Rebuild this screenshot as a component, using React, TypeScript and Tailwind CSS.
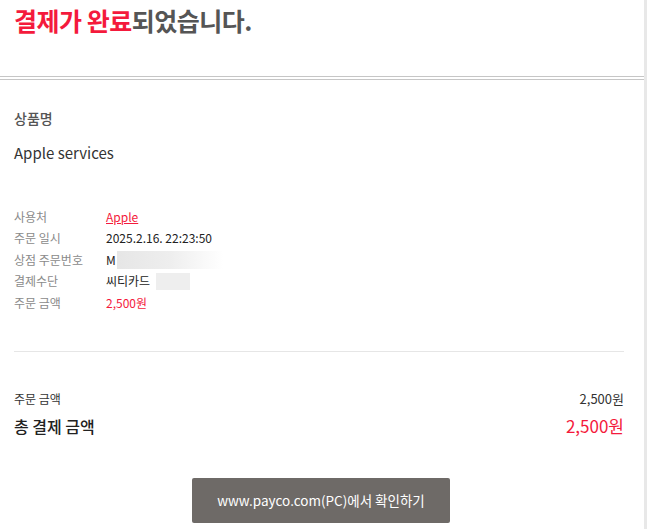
import React from "react";

const font = { fontFamily: '"Noto Sans CJK KR", "Noto Sans", sans-serif' };

function Row({ label, children }: { label: string; children: React.ReactNode }) {
  return (
    <div className="flex items-center h-[21.5px]">
      <div className="w-[92px] text-[12px] text-[#8a8a8a]">{label}</div>
      <div className="flex items-center text-[12px] text-[#222]">{children}</div>
    </div>
  );
}

export default function App() {
  return (
    <div className="flex w-[647px] h-[529px] overflow-hidden bg-white" style={font}>
      <div className="flex-1 flex flex-col">
        <div className="h-[76px] px-[14px] pt-[2px]">
          <h1 className="text-[25px] font-bold leading-[36px] tracking-[-0.5px]">
            <span className="text-[#f41a3c]">결제가 완료</span>
            <span className="text-[#555]">되었습니다.</span>
          </h1>
        </div>
        <div className="border-t border-b border-[#c6c6c6] h-[4px]" />
        <div className="px-[14px] flex flex-col">
          <div className="pt-[28px] text-[14px] font-medium text-[#555] leading-[20px]">상품명</div>
          <div className="mt-[14px] text-[15px] text-[#333] leading-[22px]">Apple services</div>
          <div className="mt-[42px] flex flex-col">
            <Row label="사용처">
              <span className="text-[#f41a3c] underline">Apple</span>
            </Row>
            <Row label="주문 일시">2025.2.16. 22:23:50</Row>
            <Row label="상점 주문번호">
              <span>M</span>
              <span className="ml-[1px] w-[106px] h-[18px] bg-gradient-to-r from-[#e6e6e6] via-[#eeeeee] to-white" />
            </Row>
            <Row label="결제수단">
              <span>씨티카드</span>
              <span className="ml-[6px] w-[34px] h-[17px] bg-[#eeeeee]" />
            </Row>
            <Row label="주문 금액">
              <span className="text-[#f41a3c]">2,500원</span>
            </Row>
          </div>
          <div className="mt-[37px] border-t border-[#e6e6e6] w-[610px]" />
          <div className="w-[610px] mt-[37px] flex justify-between items-center text-[12px] text-[#333] leading-[20px]">
            <span>주문 금액</span>
            <span className="text-[13px]">2,500원</span>
          </div>
          <div className="w-[610px] mt-[6px] flex justify-between items-center text-[16px] leading-[22px]">
            <span className="text-[#222] font-medium">총 결제 금액</span>
            <span className="text-[#f41a3c] text-[17px]">2,500원</span>
          </div>
          <div className="w-[610px] mt-[41px] flex justify-center pl-[4px]">
            <button className="w-[258px] h-[45px] bg-[#6e6a67] text-white text-[13.5px] rounded-[2px]">
              www.payco.com(PC)에서 확인하기
            </button>
          </div>
        </div>
      </div>
      <div className="w-[3px] bg-[#e8e8e8]" />
    </div>
  );
}
